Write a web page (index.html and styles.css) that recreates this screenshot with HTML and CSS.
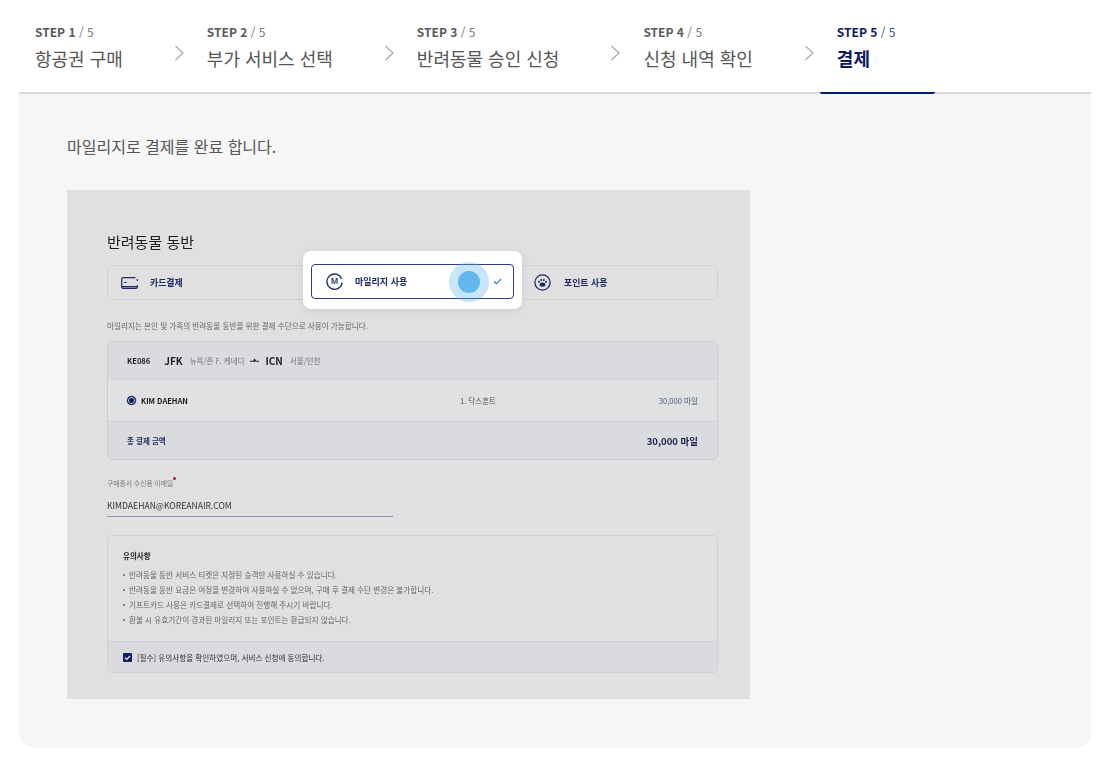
FILE: index.html
```html
<!DOCTYPE html>
<html lang="ko">
<head>
<meta charset="utf-8">
<title>결제</title>
<link rel="stylesheet" href="styles.css">
</head>
<body>
<div class="page">
  <nav class="stepper">
    <div class="step"><div class="step-no"><b>STEP 1</b> / 5</div><div class="step-name">항공권 구매</div></div>
    <svg class="chev" viewBox="0 0 10 16"><path d="M1.5 1 L9 8 L1.5 15"/></svg>
    <div class="step"><div class="step-no"><b>STEP 2</b> / 5</div><div class="step-name">부가 서비스 선택</div></div>
    <svg class="chev" viewBox="0 0 10 16"><path d="M1.5 1 L9 8 L1.5 15"/></svg>
    <div class="step"><div class="step-no"><b>STEP 3</b> / 5</div><div class="step-name">반려동물 승인 신청</div></div>
    <svg class="chev" viewBox="0 0 10 16"><path d="M1.5 1 L9 8 L1.5 15"/></svg>
    <div class="step"><div class="step-no"><b>STEP 4</b> / 5</div><div class="step-name">신청 내역 확인</div></div>
    <svg class="chev" viewBox="0 0 10 16"><path d="M1.5 1 L9 8 L1.5 15"/></svg>
    <div class="step current"><div class="step-no"><b>STEP 5</b> / 5</div><div class="step-name">결제</div></div>
  </nav>
  <main class="panel">
    <p class="lead">마일리지로 결제를 완료 합니다.</p>
    <div class="shot">
      <div class="shot-inner">
        <h2 class="title">반려동물 동반</h2>
        <div class="pay-row">
          <div class="pay-opt">
            <svg class="ic-card" viewBox="0 0 17 12"><path d="M14.5 .7 H2 A1.3 1.3 0 0 0 .7 2 V10 A1.3 1.3 0 0 0 2 11.3 H15 A1.3 1.3 0 0 0 16.3 10 V8 M16.3 4 V2 M.7 9.6 H16.3 M3 5.5 H5.5"/></svg>
            <span>카드결제</span>
          </div>
          <div class="pay-gap"></div>
          <div class="pay-opt point">
            <svg class="ic-round" viewBox="0 0 17 17"><circle cx="8.5" cy="8.5" r="7.6"/><g class="paw"><ellipse cx="8.5" cy="10.6" rx="2.9" ry="2.2"/><circle cx="5" cy="7.8" r="1"/><circle cx="7.2" cy="5.9" r="1"/><circle cx="9.8" cy="5.9" r="1"/><circle cx="12" cy="7.8" r="1"/></g></svg>
            <span>포인트 사용</span>
          </div>
        </div>
        <p class="note">마일리지는 본인 및 가족의 반려동물 동반을 위한 결제 수단으로 사용이 가능합니다.</p>
        <section class="fare">
          <div class="fare-head">
            <span class="flight">KE086</span>
            <span class="code">JFK</span><span class="city">뉴욕/존 F. 케네디</span>
            <svg class="plane" viewBox="0 0 9 5"><path d="M0 2.8 H9 V3.8 H0 Z M3.2 3 L4 .8 H5 L6 3 Z"/></svg>
            <span class="code">ICN</span><span class="city">서울/인천</span>
          </div>
          <div class="fare-row">
            <span class="radio"></span>
            <span class="pax">KIM DAEHAN</span>
            <span class="seat">1. 닥스훈트</span>
            <span class="miles">30,000 마일</span>
          </div>
          <div class="fare-total">
            <span class="total-label">총 결제 금액</span>
            <span class="total-val">30,000 마일</span>
          </div>
        </section>
        <div class="field">
          <div class="field-label">구매증서 수신용 이메일<i class="req"></i></div>
          <div class="field-val">KIMDAEHAN@KOREANAIR.COM</div>
        </div>
        <section class="notice">
          <div class="notice-body">
            <h3 class="notice-title">유의사항</h3>
            <ul class="notice-list">
              <li>반려동물 동반 서비스 티켓은 지정된 승객만 사용하실 수 있습니다.</li>
              <li>반려동물 동반 요금은 여정을 변경하여 사용하실 수 없으며, 구매 후 결제 수단 변경은 불가합니다.</li>
              <li>기프트카드 사용은 카드결제로 선택하여 진행해 주시기 바랍니다.</li>
              <li>환불 시 유효기간이 경과된 마일리지 또는 포인트는 환급되지 않습니다.</li>
            </ul>
          </div>
          <div class="agree">
            <svg class="check" viewBox="0 0 9 9"><rect width="9" height="9" rx="1"/><path d="M2 4.6 L3.8 6.4 L7 2.8"/></svg>
            <span>[필수] 유의사항을 확인하였으며, 서비스 신청에 동의합니다.</span>
          </div>
        </section>
      </div>
      <div class="focus-card">
        <div class="focus-opt">
          <svg class="ic-round m" viewBox="0 0 17 17"><path d="M16.1 9.5 A7.6 7.6 0 1 1 15.6 5.8"/><text x="8.5" y="11.4" text-anchor="middle">M</text></svg>
          <span class="focus-text">마일리지 사용</span>
          <svg class="tick" viewBox="0 0 10 8"><path d="M1 4 L3.8 6.6 L9 1.2"/></svg>
        </div>
        <span class="dot"></span>
      </div>
    </div>
  </main>
</div>
</body>
</html>
```
FILE: styles.css
```css
* { box-sizing: border-box; }
html, body { margin: 0; padding: 0; background: #fff; }
body { font-family: "Noto Sans CJK KR", "Noto Sans", sans-serif; color: #333; width: 1114px; height: 770px; overflow: hidden; }
.page { padding: 0 23px 0 19px; }

.stepper { display: flex; align-items: flex-start; height: 94px; border-bottom: 2px solid #d9d9d9; padding-left: 16px; }
.step { padding-top: 23px; margin-right: 51px; }
.step-no { font-size: 12px; line-height: 18px; color: #777; }
.step-no b { font-weight: 700; color: #5a5a5a; }
.step-name { margin-top: 4px; font-size: 18px; line-height: 26px; color: #555; }
.chev { width: 10px; height: 16px; margin-top: 45px; margin-right: 23px; flex: none; fill: none; stroke: #a8a8a8; stroke-width: 1.2; }
.step.current { position: relative; margin: 0 0 -2px -17px; padding-left: 17px; padding-right: 39px; height: 94px; border-bottom: 2px solid #051c6b; border-radius: 0 0 2px 2px; }
.step.current .step-no { color: #3c4c86; }
.step.current .step-no b { color: #0a1a5c; }
.step.current .step-name { font-weight: 700; color: #0a1a5c; }

.panel { height: 654px; background: #f6f6f6; border-radius: 0 0 16px 16px; padding: 40px 48px 0; }
.lead { margin: 0; font-size: 16px; line-height: 24px; color: #555; }
.shot { position: relative; width: 683px; height: 509px; margin-top: 32px; background: #e0e0e0; }
.shot-inner { padding: 40px 32px 0 40px; filter: blur(.5px); }

.title { margin: 0; font-size: 15px; line-height: 24px; font-weight: 400; color: #1d1d1d; }
.pay-row { display: flex; height: 35px; margin-top: 11px; }
.pay-opt { flex: 1 1 0; display: flex; align-items: center; border: 1px solid #d2d2d2; border-radius: 6px; padding-left: 13px; font-size: 8.9px; font-weight: 700; color: #1b2a66; }
.pay-gap { width: 196px; flex: none; }
.pay-opt.point { flex: 0 0 199px; padding-left: 14px; }
.pay-opt.point .ic-round { margin-right: 13px; }
.ic-card { width: 17px; height: 12px; margin-right: 12px; fill: none; stroke: #1b2a66; stroke-width: 1.2; }
.ic-round { width: 17px; height: 17px; margin-right: 12px; fill: none; stroke: #1b2a66; stroke-width: 1.3; }
.paw { fill: #1b2a66; stroke: none; }

.note { margin: 18px 0 0; font-size: 7.6px; line-height: 16px; color: #666; }

.fare { margin-top: 7px; border: 1px solid #c9ccd2; border-radius: 5px; overflow: hidden; background: #d9dbdf; }
.fare-head { display: flex; align-items: center; height: 38px; padding-left: 19px; border-bottom: 1px solid #d2d4d8; }
.flight { font-size: 7.6px; font-weight: 700; color: #222; margin-right: 14px; }
.code { font-size: 10px; font-weight: 700; color: #222; margin-right: 7px; }
.city { font-size: 7.5px; color: #777; }
.plane { width: 9px; height: 5px; margin: 0 7px 0 5px; fill: #222; }
.fare-row { display: flex; align-items: center; height: 42px; padding: 0 19px; background: #e0e1e2; border-bottom: 1px solid #cfd1d6; font-size: 7.5px; }
.radio { width: 9px; height: 9px; border-radius: 50%; background: #0a1a5c; border: 1.5px solid #0a1a5c; box-shadow: inset 0 0 0 1px #dfe1e6, 0 0 0 .5px #9aa3c0; margin-right: 5px; }
.pax { font-weight: 700; color: #1a1a1a; flex: 0 0 319px; }
.seat { color: #555; flex: 1; }
.miles { color: #4c5674; font-size: 7.6px; }
.fare-total { display: flex; align-items: center; justify-content: space-between; height: 37px; padding: 0 19px; }
.total-label { font-size: 7.5px; font-weight: 700; color: #24335f; }
.total-val { font-size: 9.5px; font-weight: 700; color: #16204f; }

.field { margin-top: 18px; }
.field-label { font-size: 6.8px; line-height: 10px; color: #7a7a7a; position: relative; width: max-content; padding-right: 3px; }
.req { position: absolute; right: 0; top: -1px; width: 3px; height: 3px; border-radius: 50%; background: #c8102e; }
.field-val { width: 286px; height: 21px; margin-top: 8px; border-bottom: 1px solid #8a95b5; font-size: 8.6px; line-height: 19px; color: #333; }

.notice { margin-top: 18px; border: 1px solid #d0d0d0; border-radius: 5px; }
.notice-body { padding: 10px 15px 11px; height: 105px; }
.notice-title { margin: 0; font-size: 7.5px; line-height: 20px; font-weight: 700; color: #222; }
.notice-list { list-style: none; margin: 1px 0 0; padding: 0; font-size: 7.6px; line-height: 15px; color: #666; }
.notice-list li { padding-left: 6px; position: relative; }
.notice-list li::before { content: ""; position: absolute; left: 0; top: 7px; width: 2px; height: 2px; border-radius: 50%; background: #666; }
.agree { display: flex; align-items: center; height: 31px; padding-left: 15px; background: #dadbde; border-top: 1px solid #cfd1d6; border-radius: 0 0 5px 5px; font-size: 7.6px; color: #333; }
.check { width: 9px; height: 9px; margin-right: 5px; }
.check rect { fill: #0f1f63; }
.check path { fill: none; stroke: #fff; stroke-width: 1.1; }

.focus-card { position: absolute; left: 236px; top: 61px; width: 219px; height: 58px; background: #fff; border-radius: 8px; box-shadow: 0 2px 8px rgba(0,0,0,.08); padding: 13px 8px 11px; }
.focus-opt { display: flex; align-items: center; height: 35px; border: 1.5px solid #2f3d78; border-radius: 4px; padding-left: 13.5px; }
.ic-round.m { margin-right: 12.5px; }
.ic-round.m text { font-family: "Noto Sans", sans-serif; font-size: 8px; font-weight: 600; fill: #1b2a66; stroke: none; }
.focus-text { font-size: 9px; font-weight: 700; color: #1b2a66; flex: 1; filter: blur(.35px); }
.tick { width: 9px; height: 7px; margin-right: 11px; fill: none; stroke: #2a6fd0; stroke-width: 1.3; }
.dot { position: absolute; left: 155px; top: 20px; width: 22px; height: 22px; border-radius: 50%; background: #62b8ea; box-shadow: 0 0 0 9px rgba(98,184,234,.35); }
```
